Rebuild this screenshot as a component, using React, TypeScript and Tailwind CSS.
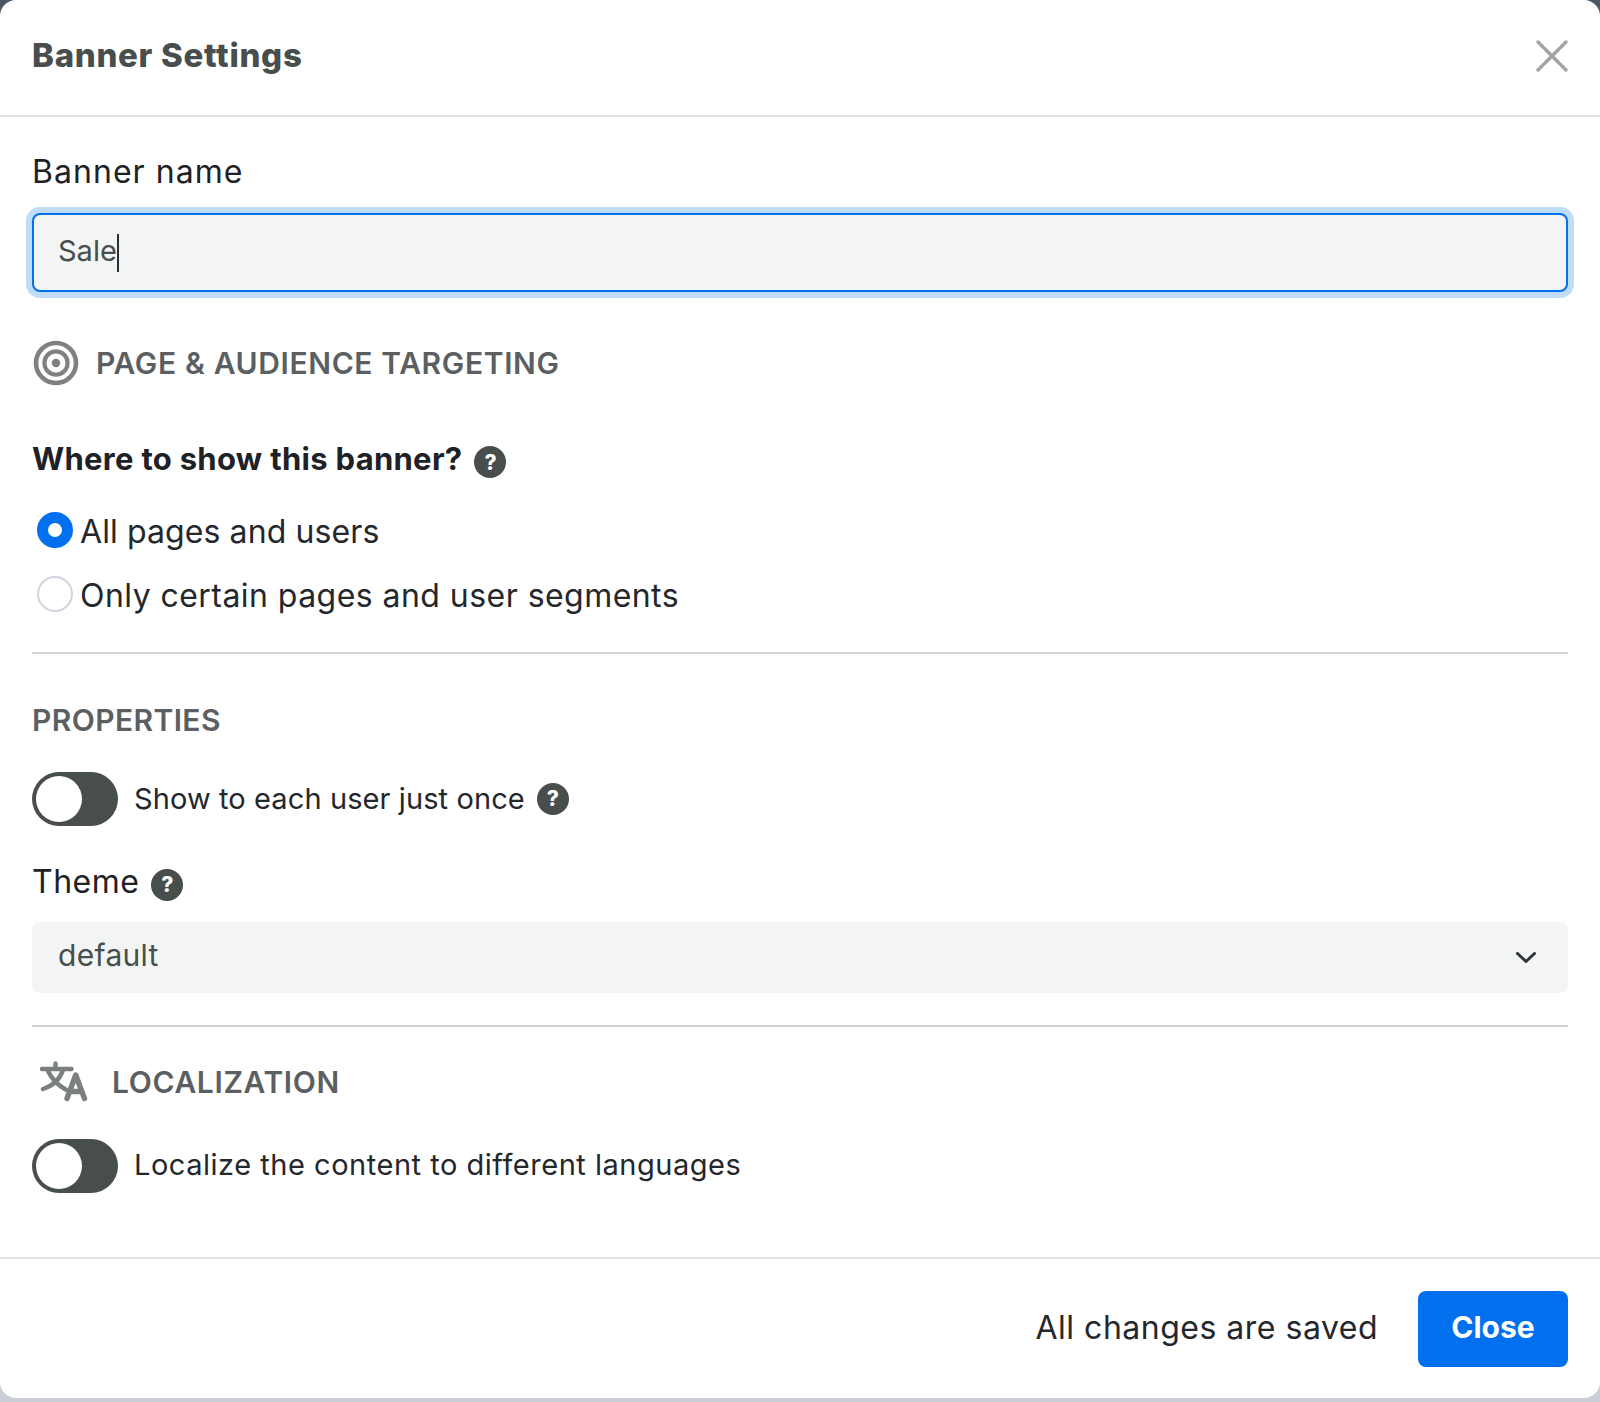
const font = "[font-family:Inter,'Liberation_Sans',sans-serif]";

function Help({ className = "" }: { className?: string }) {
  return (
    <span className={"flex h-8 w-8 shrink-0 items-center justify-center rounded-full bg-[#484d4d] text-[21px] leading-none font-extrabold text-white " + className}>?</span>
  );
}

function Toggle() {
  return (
    <span className="flex h-[54px] w-[86px] shrink-0 items-center rounded-full bg-[#484d4d] pl-1">
      <span className="h-[46px] w-[46px] rounded-full bg-white" />
    </span>
  );
}

export default function App() {
  return (
    <div className={"h-[1402px] w-full overflow-hidden bg-[linear-gradient(#4b5763_0,#4b5763_16px,#c9cdd6_16px)] " + font}>
      <div className="flex h-[1398px] w-full flex-col rounded-2xl bg-white">
        <header className="flex h-[117px] shrink-0 items-center justify-between border-b-2 border-[#e0e4e8] pr-8 pb-[3px] pl-8">
          <h1 className="text-[33px] font-extrabold tracking-[0.7px] text-[#484d4d]">Banner Settings</h1>
          <svg width="32" height="32" viewBox="0 0 32 32" fill="none" stroke="#a3a3a3" strokeWidth="3.4" strokeLinecap="round">
            <path d="M2 2 30 30M30 2 2 30" />
          </svg>
        </header>

        <main className="flex flex-1 flex-col px-8">
          <label className="mt-[33px] text-[32px] leading-[44px] tracking-[1.05px] text-[#1e2126]">Banner name</label>
          <div className="mt-[19px] flex h-[79px] items-center rounded-lg border-2 border-[#0070ef] bg-[#f3f5f4] pl-6 text-[#484d4d] shadow-[0_0_0_6px_#bfdcf8]">
            <span className="pb-1 text-[29px]">Sale</span>
            <span className="h-[38px] w-[2px] bg-[#2b2f33]" />
          </div>

          <div className="mt-[48px] flex items-center gap-[17px] pl-px">
            <svg width="46" height="46" viewBox="0 0 46 46" fill="none" stroke="#808080">
              <circle cx="23" cy="23" r="20" strokeWidth="4.6" />
              <circle cx="23" cy="23" r="11.6" strokeWidth="4.2" />
              <circle cx="23" cy="23" r="4.2" fill="#808080" stroke="none" />
            </svg>
            <h2 className="text-[30px] font-semibold tracking-[0.63px] text-[#5b5f62]">PAGE &amp; AUDIENCE TARGETING</h2>
          </div>

          <div className="mt-[50px] flex items-center gap-3">
            <h3 className="text-[31px] font-bold tracking-[0.3px] text-[#1e2126]">Where to show this banner?</h3>
            <Help className="mt-[6px]" />
          </div>

          <div className="mt-[22px] flex items-center gap-[7px] pl-[5px]">
            <span className="h-9 w-9 shrink-0 rounded-full border-[11px] border-[#0070ef] bg-white" />
            <span className="pt-[3px] text-[32px] tracking-[0.1px] text-[#24272c]">All pages and users</span>
          </div>
          <div className="mt-[13px] flex items-center gap-[7px] pl-[5px]">
            <span className="h-9 w-9 shrink-0 rounded-full border-2 border-[#d0d6de] bg-white" />
            <span className="pt-[3px] text-[32px] tracking-[0.45px] text-[#24272c]">Only certain pages and user segments</span>
          </div>

          <hr className="mt-[32px] border-0 border-t-2 border-[#d0d4d4]" />

          <h2 className="mt-[44px] text-[30px] font-semibold tracking-[0.4px] text-[#5b5f62]">PROPERTIES</h2>

          <div className="mt-[29px] flex items-center gap-4">
            <Toggle />
            <span className="text-[29px] tracking-[0.1px] text-[#24272c]">Show to each user just once</span>
            <Help className="-ml-1" />
          </div>

          <div className="mt-[32px] flex items-center gap-3">
            <span className="text-[32px] tracking-[0.5px] text-[#1e2126]">Theme</span>
            <Help className="mt-[6px]" />
          </div>

          <div className="mt-[16px] flex h-[71px] items-center justify-between rounded-lg bg-[#f3f5f4] pr-8 pl-[26px]">
            <span className="pb-[3px] text-[30px] tracking-[0.3px] text-[#484d4d]">default</span>
            <svg width="20" height="11" viewBox="0 0 20 11" fill="none" stroke="#2f3338" strokeWidth="3" strokeLinecap="round" strokeLinejoin="round">
              <path d="M1.5 1.5 10 9.5l8.5-8" />
            </svg>
          </div>

          <hr className="mt-[32px] border-0 border-t-2 border-[#cdd3d3]" />

          <div className="mt-[33px] flex items-center gap-[24px] pl-2">
            <svg width="48" height="42" viewBox="0 0 48 42" fill="none" stroke="#7b7f80" strokeLinecap="round" strokeLinejoin="round">
              <path strokeWidth="4.4" d="M2 8h29.500M15.500 2.500V8M7.500 9c3.500 8 9 14.500 19 20M23 9c-3 9-9.500 15.500-20 19" />
              <path strokeWidth="5.400" d="M27 37.500 35.700 14 44.500 37.500M30 30.500h11.500" />
            </svg>
            <h2 className="text-[30px] font-semibold tracking-[0.63px] text-[#5b5f62]">LOCALIZATION</h2>
          </div>

          <div className="mt-[34px] flex items-center gap-4">
            <Toggle />
            <span className="pb-[2px] text-[29px] tracking-[0.52px] text-[#24272c]">Localize the content to different languages</span>
          </div>
        </main>

        <footer className="flex h-[141px] shrink-0 items-center justify-end gap-10 border-t-2 border-[#dfe3e8] pr-8">
          <span className="pb-[2px] text-[32px] tracking-[0.5px] text-[#24272c]">All changes are saved</span>
          <button className="flex h-[76px] w-[150px] items-center justify-center rounded-lg bg-[#0070ee] pb-[2px] text-[30px] font-bold text-white">Close</button>
        </footer>
      </div>
    </div>
  );
}
